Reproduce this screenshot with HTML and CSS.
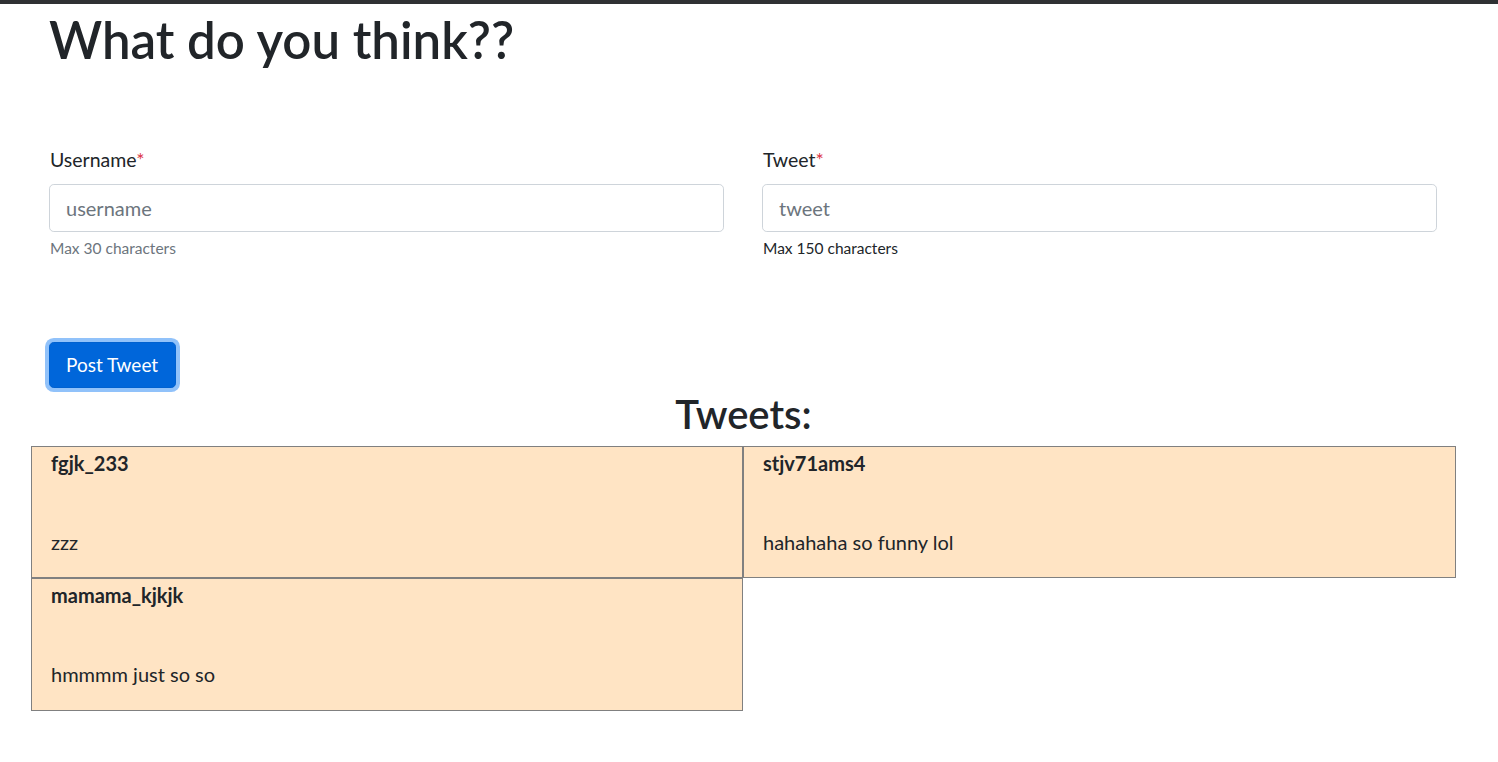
FILE: index.html
```html
<!DOCTYPE html>
<html lang="en">
<head>
<meta charset="utf-8">
<title>What do you think??</title>
<link rel="stylesheet" href="styles.css">
</head>
<body>
<div class="topbar"></div>
<main class="page">
  <h1 class="title">What do you think??</h1>
  <form class="tweet-form">
    <div class="fields">
      <div class="field">
        <label class="label" for="username">Username<span class="req">*</span></label>
        <input class="input" id="username" type="text" placeholder="username">
        <div class="hint muted">Max 30 characters</div>
      </div>
      <div class="field">
        <label class="label" for="tweet">Tweet<span class="req">*</span></label>
        <input class="input" id="tweet" type="text" placeholder="tweet">
        <div class="hint">Max 150 characters</div>
      </div>
    </div>
    <div class="actions">
      <button class="btn" type="button">Post Tweet</button>
    </div>
  </form>
  <h2 class="tweets-title">Tweets:</h2>
  <div class="tweets">
    <div class="tweet">
      <div class="tweet-user">fgjk_233</div>
      <div class="tweet-text">zzz</div>
    </div>
    <div class="tweet">
      <div class="tweet-user">stjv71ams4</div>
      <div class="tweet-text">hahahaha so funny lol</div>
    </div>
    <div class="tweet">
      <div class="tweet-user">mamama_kjkjk</div>
      <div class="tweet-text">hmmmm just so so</div>
    </div>
  </div>
</main>
</body>
</html>
```

FILE: styles.css
```css
* { box-sizing: border-box; }

html, body {
  margin: 0;
  padding: 0;
  background: #fff;
  color: #212529;
  font-family: "Lato", "Noto Sans", sans-serif;
  font-size: 16px;
  line-height: 1.5;
}

.topbar {
  height: 4px;
  background: #2f3133;
}

.page {
  width: 1425px;
  margin-left: 31px;
}

.title {
  margin: 0;
  padding: 6px 18px 0;
  font-size: 51px;
  font-weight: 600;
  line-height: 60px;
  height: 144px;
}

.tweet-form {
  padding: 0 19px 0 18px;
}

.fields {
  display: grid;
  grid-template-columns: 1fr 1fr;
  column-gap: 38px;
}

.field {
  display: flex;
  flex-direction: column;
}

.label {
  display: block;
  font-size: 19.5px;
  line-height: 24px;
  margin-bottom: 12px;
  padding-left: 1px;
}

.req { color: #dc3545; }

.input {
  display: block;
  width: 100%;
  height: 48px;
  padding: 8px 16px;
  font-family: inherit;
  font-size: 20px;
  color: #212529;
  background: #fff;
  border: 1px solid #ced4da;
  border-radius: 4.8px;
  outline: none;
}

.input::placeholder { color: #6c757d; opacity: 1; }

.hint {
  margin-top: 6px;
  font-size: 15.5px;
  line-height: 21px;
  color: #212529;
  padding-left: 1px;
}

.hint.muted { color: #6c757d; }

.actions {
  padding-top: 83px;
}

.btn {
  display: inline-block;
  width: 127px;
  height: 46px;
  padding: 0 16px;
  font-family: inherit;
  font-size: 19px;
  line-height: 44px;
  text-align: left;
  white-space: nowrap;
  color: #fff;
  background: #0066da;
  border: 1px solid #0061d0;
  border-radius: 4.8px;
  box-shadow: 0 0 0 4px #91c2fa;
  cursor: pointer;
}

.tweets-title {
  margin: -3px 0 0;
  text-align: center;
  font-size: 40px;
  font-weight: 600;
  line-height: 58px;
  height: 61px;
}

.tweets {
  display: grid;
  grid-template-columns: 712px 713px;
}

.tweet {
  height: 132px;
  background: #ffe4c4;
  border: 1px solid #808080;
  padding: 3px 19px 0;
}

.tweet:nth-child(3) { height: 133px; }

.tweet-user {
  font-size: 20px;
  font-weight: 700;
  line-height: 26px;
}

.tweet-text {
  margin-top: 51px;
  font-size: 20px;
  line-height: 30px;
}
```
